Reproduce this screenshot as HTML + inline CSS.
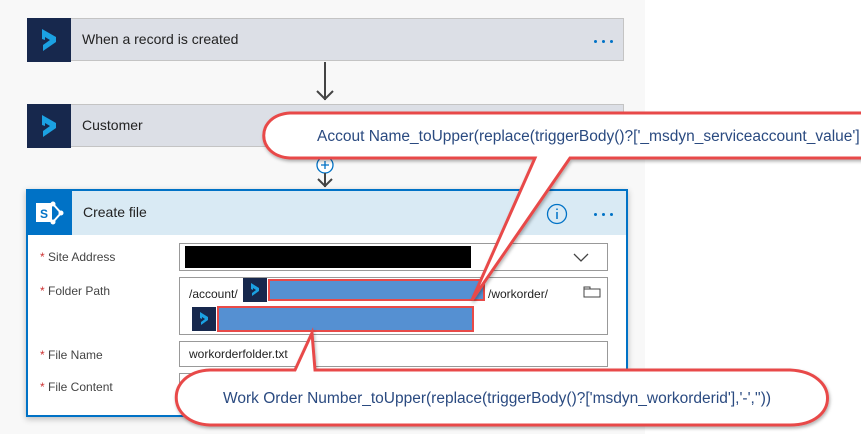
<!DOCTYPE html>
<html><head><style>
body{margin:0;width:861px;height:434px;overflow:hidden;position:relative;background:#fff;font-family:"Segoe UI","Liberation Sans",sans-serif}
.bg{position:absolute;left:0;top:0;width:645px;height:434px;background:#f8f8f8}
.card{position:absolute;left:27px;width:597px;height:43px;background:#dcdfe6;border:1px solid #c4c4c4;box-sizing:border-box}
.card .ic{position:absolute;left:-1px;top:-1px;width:44px;height:44px;background:#17284d}
.card .t{position:absolute;left:54px;top:12px;font-size:14px;color:#222}
.lbl{position:absolute;left:40px;font-size:12px;color:#444}
.lbl b{color:#c33;font-weight:normal}
.inp{position:absolute;left:179px;width:429px;border:1px solid #999;box-sizing:border-box;background:#fff}
.dots{position:absolute;display:flex;gap:5px}
.dots i{width:3px;height:3px;border-radius:50%;background:#0072c6}
</style></head><body>
<div class="bg"></div>
<div class="card" style="top:18px"><div class="ic"><svg width="44" height="44"><path d="M15 11 L29 19 L29 24 L16 33 L16 27 L23 22 L18 19 L18 22 L15 21Z" fill="#1ba1e2"/></svg></div><div class="t">When a record is created</div>
<div class="dots" style="left:566px;top:21px"><i></i><i></i><i></i></div></div>
<div style="position:absolute;left:324px;top:62px;width:2px;height:38px;background:#444"></div>
<svg style="position:absolute;left:315px;top:88px" width="20" height="16"><path d="M2 3 L10 11 L18 3" fill="none" stroke="#444" stroke-width="2"/></svg>
<div class="card" style="top:104px"><div class="ic"><svg width="44" height="44"><path d="M15 11 L29 19 L29 24 L16 33 L16 27 L23 22 L18 19 L18 22 L15 21Z" fill="#1ba1e2"/></svg></div><div class="t">Customer</div></div>
<svg style="position:absolute;left:314px;top:155px" width="22" height="35"><circle cx="11" cy="10" r="8" fill="#fff" stroke="#0072c6" stroke-width="1.3"/><path d="M11 6v8M7 10h8" stroke="#0072c6" stroke-width="1.3"/><path d="M11 18v14M4 24l7 7 7-7" fill="none" stroke="#444" stroke-width="2"/></svg>
<div style="position:absolute;left:26px;top:189px;width:602px;height:228px;border:2px solid #0072c6;box-sizing:border-box;background:#fff;box-shadow:0 2px 6px rgba(0,0,0,.25)">
 <div style="position:absolute;left:0;top:0;right:0;height:44px;background:#d9eaf4"></div>
 <div style="position:absolute;left:0;top:0;width:44px;height:44px;background:#0072c6"><svg width="44" height="44"><rect x="8" y="12" width="16" height="19" fill="#fff"/><text x="12" y="27" font-size="12" font-weight="bold" fill="#0072c6" font-family="Liberation Sans">S</text><path d="M25 13 L33 22 L25 31" fill="none" stroke="#fff" stroke-width="2"/><circle cx="25" cy="13" r="2.5" fill="#fff"/><circle cx="33" cy="22" r="2.5" fill="#fff"/><circle cx="25" cy="31" r="2.5" fill="#fff"/></svg></div>
 <div style="position:absolute;left:55px;top:13px;font-size:14px;color:#222">Create file</div>
 <svg style="position:absolute;left:518px;top:12px" width="22" height="22"><circle cx="11" cy="11" r="9.5" fill="none" stroke="#0072c6" stroke-width="1.3"/><path d="M11 9v7M11 5.5v1.5" stroke="#0072c6" stroke-width="1.5"/></svg>
 <div class="dots" style="left:566px;top:22px"><i></i><i></i><i></i></div>
</div>
<div class="lbl" style="top:250px"><b>*</b> Site Address</div>
<div class="lbl" style="top:284px"><b>*</b> Folder Path</div>
<div class="lbl" style="top:348px"><b>*</b> File Name</div>
<div class="lbl" style="top:380px"><b>*</b> File Content</div>
<div class="inp" style="top:243px;height:28px"><div style="position:absolute;left:5px;top:2px;width:286px;height:22px;background:#000"></div>
<svg style="position:absolute;left:392px;top:8px" width="18" height="12"><path d="M2 2l7 7 7-7" fill="none" stroke="#444" stroke-width="1.3"/></svg></div>
<div class="inp" style="top:277px;height:58px"><div style="position:absolute;left:9px;top:9px;font-size:12px;color:#222">/account/</div>
<div style="position:absolute;left:308px;top:9px;font-size:12px;color:#222">/workorder/</div>
<svg style="position:absolute;left:403px;top:6px" width="18" height="14"><path d="M1 3h6v2h10v8H1z M1 5h16" fill="none" stroke="#444" stroke-width="1"/></svg></div>
<div style="position:absolute;left:243px;top:278px;width:24px;height:24px;background:#17284d"><svg width="24" height="24"><path d="M8 5l8 5v3l-7 5v-3l4-3-3-2v2l-2-1z" fill="#1ba1e2"/></svg></div>
<div style="position:absolute;left:268px;top:279px;width:217px;height:22px;background:#5590d2;border:2px solid #e84a48;box-sizing:border-box"></div>
<div style="position:absolute;left:192px;top:307px;width:24px;height:24px;background:#17284d"><svg width="24" height="24"><path d="M8 5l8 5v3l-7 5v-3l4-3-3-2v2l-2-1z" fill="#1ba1e2"/></svg></div>
<div style="position:absolute;left:217px;top:306px;width:257px;height:26px;background:#5590d2;border:2px solid #e84a48;box-sizing:border-box"></div>
<div class="inp" style="top:341px;height:26px"><div style="position:absolute;left:9px;top:5px;font-size:12px;color:#222">workorderfolder.txt</div></div>
<div class="inp" style="top:373px;height:26px"></div>
<svg style="position:absolute;left:0;top:0" width="861" height="434">
<defs><filter id="s"><feDropShadow dx="1" dy="2" stdDeviation="1.5" flood-opacity=".3"/></filter></defs>
<path filter="url(#s)" d="M290 113 L870 113 L870 158 L570 158 L472 300 L535 158 L290 158 C255 156 255 115 290 113Z" fill="#fff" stroke="#e84a48" stroke-width="3"/>
<path filter="url(#s)" d="M210 370 L295 370 L312 333 L315 370 L790 370 C840 372 840 425 790 425 L210 425 C165 423 165 372 210 370Z" fill="#fff" stroke="#e84a48" stroke-width="3"/>
<text x="317" y="141" font-family="Liberation Sans" font-size="15.5" fill="#2a4a80">Accout Name_toUpper(replace(triggerBody()?['_msdyn_serviceaccount_value'],</text>
<text x="223" y="403" font-family="Liberation Sans" font-size="15.5" fill="#2a4a80">Work Order Number_toUpper(replace(triggerBody()?['msdyn_workorderid'],'-',''))</text>
</svg>
</body></html>
